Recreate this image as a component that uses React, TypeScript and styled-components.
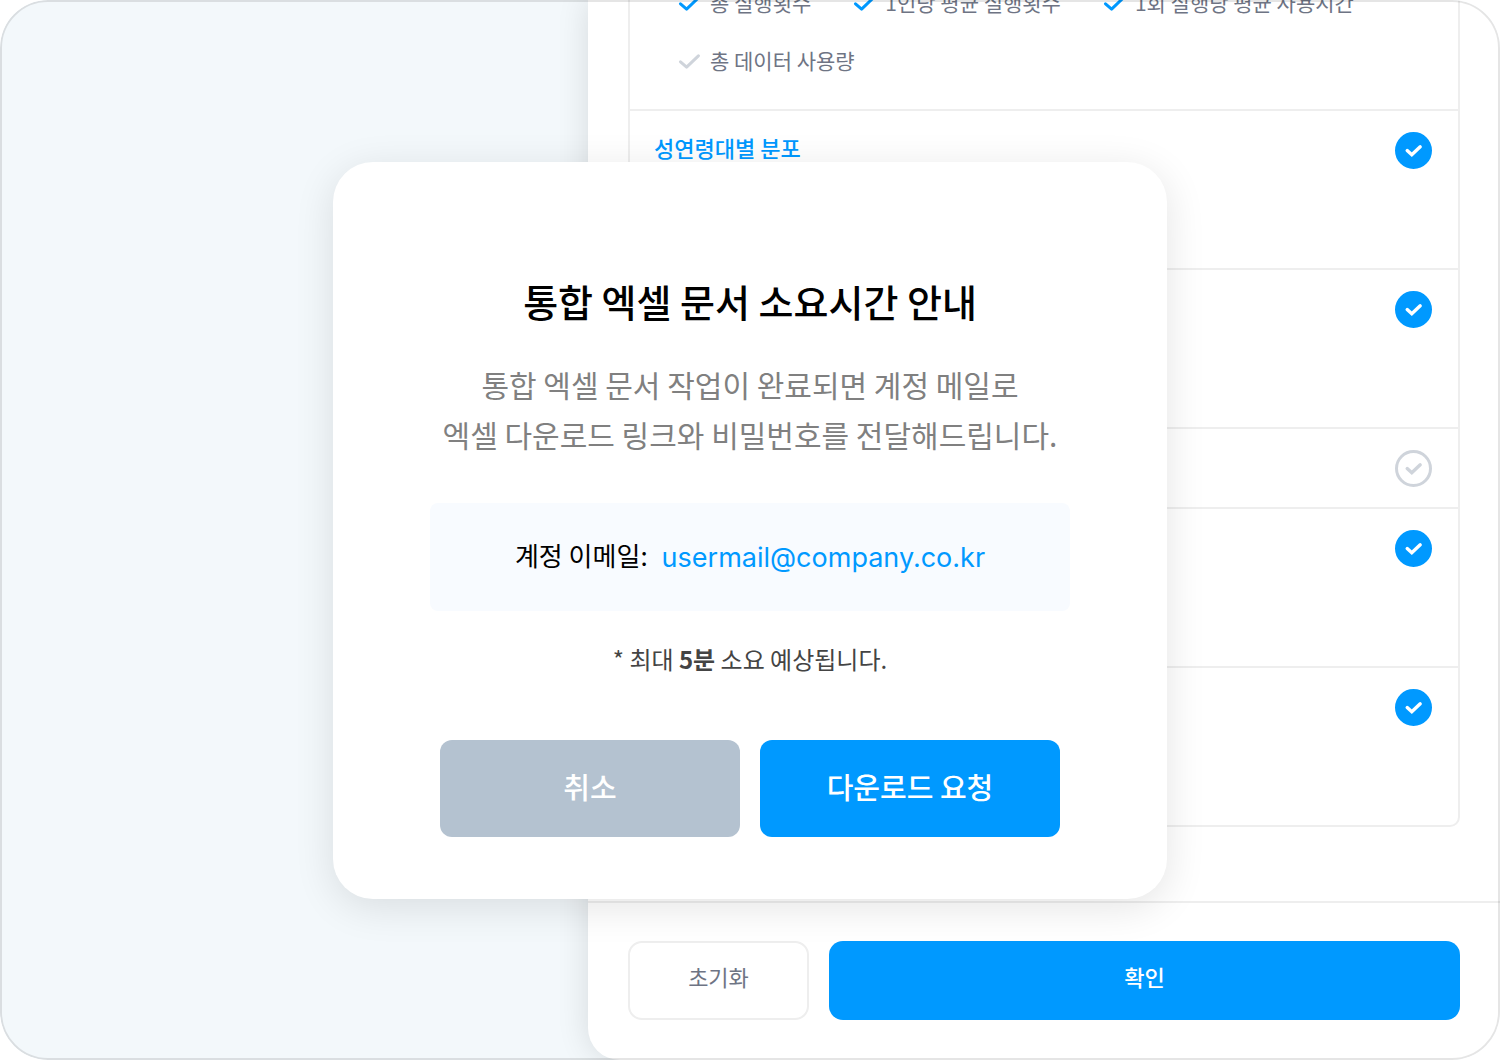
import React, { useState } from "react";
import styled, { createGlobalStyle, css } from "styled-components";

const color = {
  brand: "#0099ff",
  backdrop: "#f3f8fb",
  line: "#eeeeee",
  muted: "#6e7484",
  off: "#cfd4db",
  cancel: "#b4c2d0",
};

const GlobalStyle = createGlobalStyle`
  *, *::before, *::after { box-sizing: border-box; }
  body {
    margin: 0;
    background: #ffffff;
    font-family: "Noto Sans CJK KR", "Liberation Sans", sans-serif;
  }
  button { font: inherit; cursor: pointer; }
  h2, p, ul { margin: 0; padding: 0; }
`;

const Frame = styled.div`
  position: relative;
  display: flex;
  justify-content: flex-end;
  height: 100vh;
  overflow: hidden;
  border-radius: 48px;
  background: ${color.backdrop};

  &::after {
    content: "";
    position: absolute;
    inset: 0;
    border: 2px solid rgba(0, 0, 0, 0.1);
    border-radius: inherit;
    pointer-events: none;
  }
`;

const Panel = styled.main`
  display: flex;
  flex-direction: column;
  flex: 0 0 60.8%;
  min-width: 0;
  border-bottom-left-radius: 32px;
  background: #ffffff;
  box-shadow: 0 0 32px rgba(0, 0, 0, 0.12);
`;

const PanelBody = styled.div`
  display: flex;
  flex-direction: column;
  justify-content: flex-end;
  flex: 1;
  min-height: 0;
  overflow: hidden;
  padding: 0 40px 74px;
`;

const Card = styled.div`
  flex: none;
  border: 2px solid ${color.line};
  border-radius: 10px;
`;

const Metrics = styled.ul`
  display: flex;
  flex-wrap: wrap;
  gap: 28px 42px;
  padding: 30px 48px 34px;
  list-style: none;
`;

const MetricLabel = styled.label`
  display: flex;
  align-items: center;
  gap: 10px;
  color: ${color.muted};
  font-size: 21px;
  line-height: 30px;
  cursor: pointer;
`;

const Tick = styled.span`
  display: grid;
  place-items: center;

  & > * {
    grid-area: 1 / 1;
  }

  svg {
    pointer-events: none;
  }
`;

const TickInput = styled.input<{ $round?: boolean }>`
  appearance: none;
  width: 22px;
  height: 22px;
  margin: 0;
  cursor: pointer;

  & + svg {
    color: ${color.off};
  }

  &:checked + svg {
    color: ${color.brand};
  }

  ${(p) =>
    p.$round &&
    css`
      width: 37px;
      height: 37px;
      border: 3px solid ${color.off};
      border-radius: 50%;

      &:checked {
        border-color: ${color.brand};
        background: ${color.brand};
      }

      &:checked + svg {
        color: #ffffff;
      }
    `}
`;

const Row = styled.section<{ $compact?: boolean }>`
  display: flex;
  justify-content: space-between;
  align-items: flex-start;
  min-height: ${(p) => (p.$compact ? 80 : 159)}px;
  padding: 21px 26px 20px 24px;
  border-top: 2px solid ${color.line};
`;

const RowTitle = styled.h2`
  color: ${color.brand};
  font-size: 22px;
  font-weight: 500;
  line-height: 30px;
`;

const Footer = styled.footer`
  display: flex;
  gap: 20px;
  padding: 38px 40px 40px;
  border-top: 2px solid ${color.line};
`;

const FooterButton = styled.button<{ $primary?: boolean }>`
  flex: ${(p) => (p.$primary ? "1" : "0 0 181px")};
  height: 79px;
  padding: 0 0 10px;
  border: ${(p) => (p.$primary ? "0" : `2px solid ${color.line}`)};
  border-radius: 14px;
  background: ${(p) => (p.$primary ? color.brand : "#ffffff")};
  color: ${(p) => (p.$primary ? "#ffffff" : color.muted)};
  font-size: 22px;
  font-weight: ${(p) => (p.$primary ? 500 : 400)};
  line-height: 30px;
`;

const Overlay = styled.div`
  position: absolute;
  inset: 0;
  display: flex;
  align-items: center;
  justify-content: center;
`;

const Dialog = styled.div`
  display: flex;
  flex-direction: column;
  align-items: center;
  width: 834px;
  max-width: 100%;
  padding: 114px 97px 62px;
  border-radius: 40px;
  background: #ffffff;
  box-shadow: 0 8px 40px rgba(0, 0, 0, 0.11);
  text-align: center;
`;

const DialogTitle = styled.h2`
  color: #000000;
  font-size: 38px;
  font-weight: 500;
  line-height: 50px;
`;

const DialogText = styled.p`
  margin-top: 33px;
  color: #808080;
  font-size: 30px;
  line-height: 50px;
  white-space: nowrap;
`;

const Account = styled.p`
  display: flex;
  align-items: center;
  justify-content: center;
  gap: 14px;
  align-self: stretch;
  min-height: 108px;
  margin-top: 44px;
  border-radius: 8px;
  background: #f8fbff;
  color: #000000;
  font-size: 26px;
  line-height: 40px;
`;

const AccountLabel = styled.span`
  padding-bottom: 3px;
`;

const Email = styled.a`
  padding-top: 3px;
  color: ${color.brand};
  font-family: Inter, sans-serif;
  font-size: 27px;
  text-decoration: none;
`;

const Note = styled.p`
  margin-top: 33px;
  color: #444444;
  font-size: 24px;
  line-height: 30px;

  strong {
    font-weight: 700;
  }
`;

const DialogActions = styled.div`
  display: flex;
  align-self: stretch;
  gap: 20px;
  margin-top: 66px;
  padding: 0 10px;
`;

const DialogButton = styled.button<{ $primary?: boolean }>`
  flex: 1;
  height: 97px;
  padding: 0 0 5px;
  border: 0;
  border-radius: 12px;
  background: ${(p) => (p.$primary ? color.brand : color.cancel)};
  color: #ffffff;
  font-size: 29px;
  font-weight: 500;
  line-height: 40px;
`;

const SmallCheck = () => (
  <svg width="22" height="22" viewBox="0 0 22 22" fill="none" aria-hidden="true">
    <path
      d="M2.5 12.8 8.6 18.2 20.4 6.8"
      stroke="currentColor"
      strokeWidth="3"
      strokeLinecap="round"
      strokeLinejoin="round"
    />
  </svg>
);

const RoundCheck = () => (
  <svg width="37" height="37" viewBox="0 0 37 37" fill="none" aria-hidden="true">
    <path
      d="M12.2 18.6 16.8 22.8 25.2 14.8"
      stroke="currentColor"
      strokeWidth="3.4"
      strokeLinecap="round"
      strokeLinejoin="miter"
    />
  </svg>
);

const metrics = [
  { name: "총 실행횟수", on: true },
  { name: "1인당 평균 실행횟수", on: true },
  { name: "1회 실행당 평균 사용시간", on: true },
  { name: "총 데이터 사용량", on: false },
];

const rows = [
  { title: "성연령대별 분포", on: true },
  { title: "", on: true },
  { title: "", on: false, compact: true },
  { title: "", on: true },
  { title: "", on: true },
];

export default function App() {
  const [metricOn, setMetricOn] = useState(metrics.map((m) => m.on));
  const [rowOn, setRowOn] = useState(rows.map((r) => r.on));

  const flip = (list: boolean[], at: number) => list.map((v, i) => (i === at ? !v : v));

  return (
    <>
      <GlobalStyle />
      <Frame>
        <Panel>
          <PanelBody>
            <Card>
              <Metrics>
                {metrics.map((m, i) => (
                  <li key={m.name}>
                    <MetricLabel>
                      <Tick>
                        <TickInput
                          type="checkbox"
                          checked={metricOn[i]}
                          onChange={() => setMetricOn(flip(metricOn, i))}
                        />
                        <SmallCheck />
                      </Tick>
                      {m.name}
                    </MetricLabel>
                  </li>
                ))}
              </Metrics>
              {rows.map((r, i) => (
                <Row key={i} $compact={r.compact}>
                  {r.title ? <RowTitle>{r.title}</RowTitle> : <span />}
                  <Tick>
                    <TickInput
                      $round
                      type="checkbox"
                      aria-label={r.title || `항목 ${i + 1}`}
                      checked={rowOn[i]}
                      onChange={() => setRowOn(flip(rowOn, i))}
                    />
                    <RoundCheck />
                  </Tick>
                </Row>
              ))}
            </Card>
          </PanelBody>
          <Footer>
            <FooterButton type="button">초기화</FooterButton>
            <FooterButton type="button" $primary>
              확인
            </FooterButton>
          </Footer>
        </Panel>
        <Overlay>
          <Dialog role="dialog" aria-modal="true" aria-labelledby="dialog-title">
            <DialogTitle id="dialog-title">통합 엑셀 문서 소요시간 안내</DialogTitle>
            <DialogText>
              통합 엑셀 문서 작업이 완료되면 계정 메일로
              <br />
              엑셀 다운로드 링크와 비밀번호를 전달해드립니다.
            </DialogText>
            <Account>
              <AccountLabel>계정 이메일:</AccountLabel>
              <Email href="mailto:usermail@company.co.kr">usermail@company.co.kr</Email>
            </Account>
            <Note>
              * 최대 <strong>5분</strong> 소요 예상됩니다.
            </Note>
            <DialogActions>
              <DialogButton type="button">취소</DialogButton>
              <DialogButton type="button" $primary>
                다운로드 요청
              </DialogButton>
            </DialogActions>
          </Dialog>
        </Overlay>
      </Frame>
    </>
  );
}
